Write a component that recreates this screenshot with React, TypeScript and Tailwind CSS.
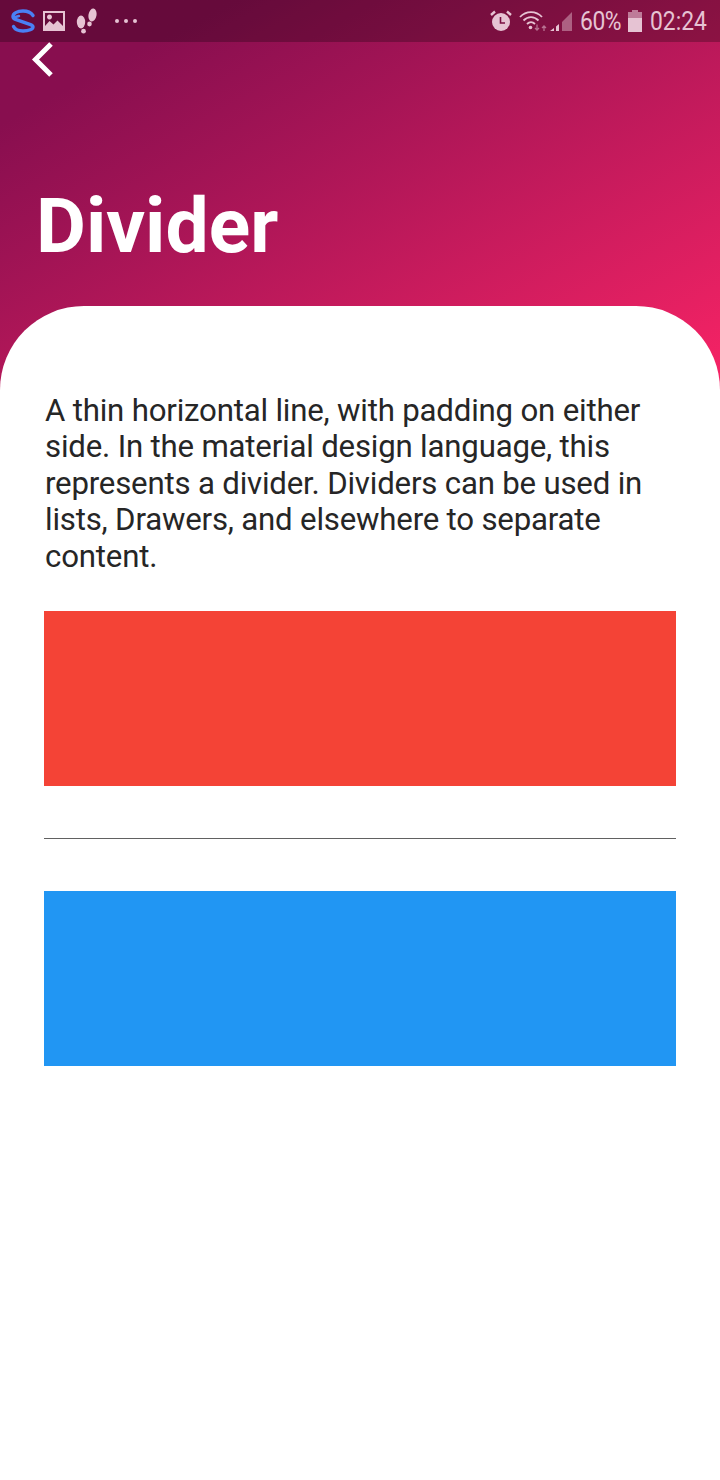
export default function App() {
  return (
    <div className="w-[720px] h-[1480px] bg-white overflow-hidden font-['Roboto',sans-serif]">
      <div className="h-[390px] bg-gradient-to-br from-[#880e4f] from-[16%] to-[#f82365] flex flex-col">
        <div className="h-[42px] bg-black/25 flex items-center justify-between pl-[10px] pr-[13px] text-[#e6c3d3]">
          <div className="flex items-center">
            <svg width="26" height="24" viewBox="0 0 26 24" fill="none" stroke="#4a80f5" strokeWidth="3.4" strokeLinecap="round" strokeLinejoin="round">
              <path d="M23 6.500C21 3.500 17.500 2 13 2C7 2 3 4.500 3 7.500C3 9 4 9.800 5.500 10.400L20.500 15.600C22 16.200 23 17 23 18C23 20 19 22 13 22C8.500 22 5 20.500 3.500 17.500" />
              <path d="M3.500 8.500L9 7" strokeWidth="2.400" />
            </svg>
            <svg className="ml-[7px]" width="22" height="21" viewBox="0 0 22 21" fill="#e6c3d3">
              <path fillRule="evenodd" d="M0 0H22V20H0ZM2 2V15L6.500 10L10.500 13.500L14.500 9.500L20 15V2ZM6.500 3.500A2.500 2.500 0 1 1 6.490 3.500Z" />
            </svg>
            <svg className="ml-[11px]" width="22" height="26" viewBox="0 0 22 26" fill="#e6c3d3">
              <ellipse cx="5" cy="14" rx="4.200" ry="6.500" />
              <ellipse cx="7.500" cy="23.200" rx="2.400" ry="2.400" />
              <ellipse cx="16.500" cy="7" rx="4" ry="6.500" transform="rotate(10 16.500 7)" />
              <ellipse cx="13.500" cy="16" rx="2.300" ry="2.400" />
            </svg>
            <div className="ml-[17px] flex gap-[5px]">
              <span className="w-1 h-1 rounded-full bg-[#e6c3d3]" />
              <span className="w-1 h-1 rounded-full bg-[#e6c3d3]" />
              <span className="w-1 h-1 rounded-full bg-[#e6c3d3]" />
            </div>
          </div>
          <div className="flex items-center">
            <svg width="22" height="22" viewBox="0 0 22 22">
              <circle cx="11" cy="12" r="9" fill="#e6c3d3" />
              <path d="M1 5L5 1.500M21 5L17 1.500" stroke="#e6c3d3" strokeWidth="2.400" />
              <path d="M10.500 7V13H15" stroke="#7a0f42" strokeWidth="1.600" fill="none" />
            </svg>
            <svg className="ml-[7px]" width="28" height="22" viewBox="0 0 28 22" fill="none" stroke="#e6c3d3" strokeWidth="1.800">
              <path d="M1 7C7 0.500 17 0.500 23 7" />
              <path d="M4.500 10.500C9 6 15 6 19.500 10.500" />
              <path d="M8 14C10.500 11.500 13.500 11.500 16 14" />
              <circle cx="11.500" cy="17.500" r="1.800" fill="#e6c3d3" stroke="none" />
              <path d="M18 14.500V19.500M16 18L18 20L20 18" strokeWidth="1.300" opacity="0.55" />
              <path d="M25 21V16M23 18L25 16L27 18" strokeWidth="1.300" opacity="0.55" />
            </svg>
            <svg className="ml-[3px]" width="23" height="22" viewBox="0 0 23 22" fill="#e6c3d3">
              <path d="M0 21L4 18V21ZM6 16.500L9 14V21H6Z" />
              <path d="M12 12L22 2V21H12Z" fillOpacity="0.45" />
            </svg>
            <span className="ml-[7px] text-[26px] leading-none tracking-[-0.5px] scale-x-[0.88] origin-left w-[42px] whitespace-nowrap">60%</span>
            <svg className="ml-[6px]" width="14" height="22" viewBox="0 0 14 22" fill="#e6c3d3">
              <path d="M4 0H10V2H14V8H0V2H4Z" fillOpacity="0.6" />
              <path d="M0 8H14V22H0Z" />
            </svg>
            <span className="ml-[8px] text-[26px] leading-none w-[57px] scale-x-[0.88] origin-left whitespace-nowrap">02:24</span>
          </div>
        </div>
        <div className="pl-[30px] h-[34px] flex items-center">
          <svg width="28" height="36" viewBox="0 0 28 36" fill="none" stroke="#fff" strokeWidth="5">
            <path d="M21 3L5.500 18.500L21 34" />
          </svg>
        </div>
        <h1 className="mt-[105px] pl-[36px] text-[76.8px] leading-[90px] font-bold text-white">Divider</h1>
      </div>
      <div className="-mt-[84px] relative bg-white rounded-t-[84px] px-[44px] pt-[86.500px]">
        <p className="pl-px text-[31.2px] leading-[36.6px] tracking-[-0.19px] text-[#262626]">
          A thin horizontal line, with padding on either side. In the material design language, this represents a divider. Dividers can be used in lists, Drawers, and elsewhere to separate content.
        </p>
        <div className="mt-[35.500px] h-[175px] bg-[#f44336]" />
        <div className="my-[52px] h-px bg-[#616161]" />
        <div className="h-[175px] bg-[#2196f3]" />
      </div>
    </div>
  );
}
